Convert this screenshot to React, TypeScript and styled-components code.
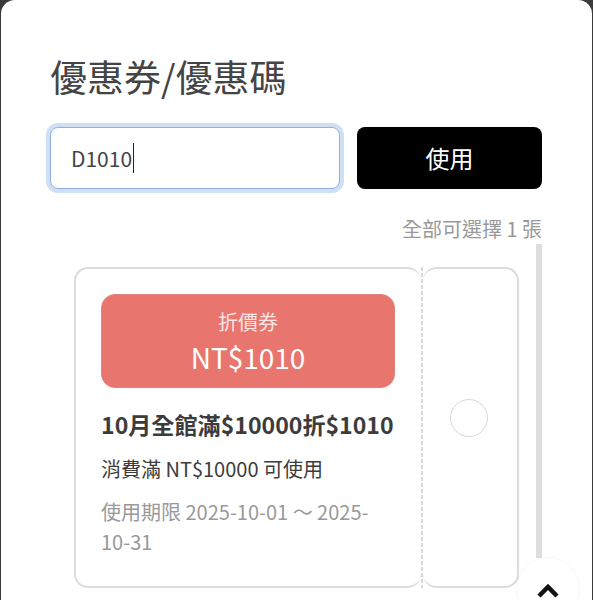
import { ReactElement } from 'react'
import styled, { createGlobalStyle } from 'styled-components'

const FONT = `"Noto Sans CJK TC", "Noto Sans", sans-serif`

const GlobalStyle = createGlobalStyle`
  html, body {
    margin: 0;
    padding: 0;
    background: #3a3a3a;
    height: 600px;
    overflow: hidden;
  }
`

const Modal = styled.div`
  position: relative;
  box-sizing: border-box;
  width: 591px;
  height: 600px;
  margin: 0 1px;
  padding: 50px 50px 0 49px;
  background: #fff;
  border-radius: 14px 14px 0 0;
  font-family: ${FONT};
  overflow: hidden;
`

const Title = styled.h2`
  margin: 0;
  font-size: 37px;
  line-height: 52px;
  font-weight: 400;
  color: #444;
`

const CodeRow = styled.div`
  display: flex;
  gap: 17px;
  margin-top: 25px;
`

const CodeInput = styled.div`
  box-sizing: border-box;
  flex: none;
  width: 290px;
  height: 62px;
  padding-left: 20px;
  display: flex;
  align-items: center;
  background: #fff;
  border: 1px solid #8fb0de;
  border-radius: 8px;
  box-shadow: 0 0 0 4px #cfdff4;
  font-size: 21px;
  color: #444;
`

const Caret = styled.span`
  width: 1px;
  height: 30px;
  margin-left: 1px;
  background: #222;
`

const ApplyButton = styled.button`
  flex: none;
  width: 185px;
  height: 62px;
  padding: 0 0 2px;
  border: 0;
  border-radius: 8px;
  background: #000;
  color: #fff;
  font-family: ${FONT};
  font-size: 24px;
`

const Count = styled.div`
  margin-top: 25px;
  text-align: right;
  font-size: 20px;
  line-height: 30px;
  color: #999;
`

const ListArea = styled.div`
  display: flex;
  padding-left: 24px;
`

const Coupon = styled.div`
  display: flex;
  flex: none;
  margin-top: 23px;
  height: 321px;
`

const CouponBody = styled.div`
  box-sizing: border-box;
  width: 347px;
  height: 321px;
  padding: 25px 26px 0 25px;
  border: 2px solid #dcdcdc;
  border-right: 0;
  border-radius: 14px;
`

const Perforation = styled.div`
  flex: none;
  width: 2px;
  height: 321px;
  background: repeating-linear-gradient(to bottom, #d8d8d8 0 4px, transparent 4px 6px);
`

const CouponStub = styled.div`
  box-sizing: border-box;
  width: 96px;
  height: 321px;
  display: flex;
  align-items: center;
  justify-content: center;
  padding: 0 2px 19px 0;
  border: 2px solid #dcdcdc;
  border-left: 0;
  border-radius: 14px;
`

const Badge = styled.div`
  height: 94px;
  box-sizing: border-box;
  padding-top: 13px;
  border: 1px solid #e0837d;
  border-radius: 14px;
  background: #e9756f;
  color: #fff;
  text-align: center;
`

const BadgeLabel = styled.div`
  font-size: 20px;
  line-height: 28px;
  color: #fbe6e4;
`

const BadgeValue = styled.div`
  margin-top: 2px;
  font-size: 28px;
  line-height: 38px;
`

const CouponTitle = styled.div`
  margin-top: 19px;
  font-size: 23.1px;
  line-height: 34px;
  font-weight: 700;
  color: #3c3c3c;
  white-space: nowrap;
`

const CouponRule = styled.div`
  margin-top: 14px;
  font-size: 20px;
  line-height: 28px;
  color: #3c3c3c;
`

const CouponDate = styled.div`
  margin-top: 14px;
  font-size: 20px;
  line-height: 30px;
  color: #999;
`

const Radio = styled.span`
  width: 38px;
  height: 38px;
  box-sizing: border-box;
  border: 1px solid #d8d8d8;
  border-radius: 50%;
`

const ScrollBar = styled.div`
  position: absolute;
  left: 536px;
  top: 244px;
  width: 6px;
  height: 314px;
  background: #dedede;
`

const ScrollTop = styled.button`
  position: absolute;
  left: 517px;
  top: 558px;
  width: 62px;
  height: 62px;
  padding: 25px 0 0;
  border: 0;
  border-radius: 50%;
  background: #fff;
  box-shadow: 0 0 3px rgba(0, 0, 0, 0.06);
  display: flex;
  justify-content: center;
  box-sizing: border-box;
`

const App = (): ReactElement => {
  return (
    <>
      <GlobalStyle />
      <Modal>
        <Title>優惠券/優惠碼</Title>
        <CodeRow>
          <CodeInput>
            D1010
            <Caret />
          </CodeInput>
          <ApplyButton>使用</ApplyButton>
        </CodeRow>
        <Count>全部可選擇 1 張</Count>
        <ListArea>
          <Coupon>
            <CouponBody>
              <Badge>
                <BadgeLabel>折價券</BadgeLabel>
                <BadgeValue>NT$1010</BadgeValue>
              </Badge>
              <CouponTitle>10月全館滿$10000折$1010</CouponTitle>
              <CouponRule>消費滿 NT$10000 可使用</CouponRule>
              <CouponDate>使用期限 2025-10-01 ～ 2025-10-31</CouponDate>
            </CouponBody>
            <Perforation />
            <CouponStub>
              <Radio />
            </CouponStub>
          </Coupon>
        </ListArea>
      </Modal>
      <ScrollBar />
      <ScrollTop aria-label="top">
        <svg width="24" height="16" viewBox="0 0 24 16" fill="none">
          <path d="M3 13 L12 4 L21 13" stroke="#111" strokeWidth="4.5" />
        </svg>
      </ScrollTop>
    </>
  )
}

export default App
